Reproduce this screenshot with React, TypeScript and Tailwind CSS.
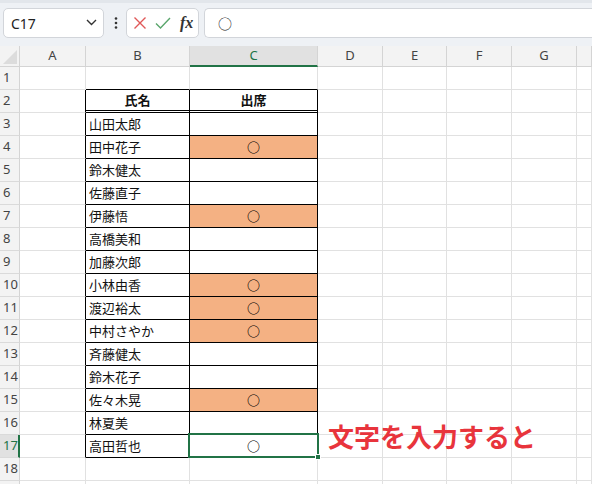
import React from 'react';

const FONT = { fontFamily: '"Noto Sans CJK JP", "Noto Sans", sans-serif' };
const UI = { fontFamily: '"Noto Sans", "Liberation Sans", sans-serif' };

const cols = [
  { key: 'A', w: 'w-[66px]' },
  { key: 'B', w: 'w-[104px]' },
  { key: 'C', w: 'w-[128px]' },
  { key: 'D', w: 'w-[65px]' },
  { key: 'E', w: 'w-[64px]' },
  { key: 'F', w: 'w-[65px]' },
  { key: 'G', w: 'w-[65px]' },
  { key: 'H', w: 'flex-1' },
];

const names: Record<number, [string, boolean]> = {
  3: ['山田太郎', false],
  4: ['田中花子', true],
  5: ['鈴木健太', false],
  6: ['佐藤直子', false],
  7: ['伊藤悟', true],
  8: ['高橋美和', false],
  9: ['加藤次郎', false],
  10: ['小林由香', true],
  11: ['渡辺裕太', true],
  12: ['中村さやか', true],
  13: ['斉藤健太', false],
  14: ['鈴木花子', false],
  15: ['佐々木晃', true],
  16: ['林夏美', false],
  17: ['高田哲也', true],
};

function Cell({ r, ci }: { r: number; ci: number }) {
  const c = cols[ci].key;
  const inTable = r >= 2 && r <= 17;
  const rightBlack = inTable && (c === 'A' || c === 'B' || c === 'C');
  const bottomBlack = r >= 1 && r <= 17 && (c === 'B' || c === 'C');
  const doubleBottom = r === 2 && (c === 'B' || c === 'C');
  const entry = names[r];
  const filled = c === 'C' && entry && entry[1] && r !== 17;
  const selected = c === 'C' && r === 17;

  let content: React.ReactNode = null;
  if (r === 2 && c === 'B') content = <span className="w-full text-center font-bold">氏名</span>;
  if (r === 2 && c === 'C') content = <span className="w-full text-center font-bold">出席</span>;
  if (entry && c === 'B') content = <span className="pl-[3px]">{entry[0]}</span>;
  if (entry && c === 'C' && entry[1])
    content = <span className="w-full text-center text-[13px] font-bold text-black">○</span>;

  return (
    <div
      className={[
        'relative flex h-full shrink-0 items-center border-r text-[13px] text-[#111]',
        cols[ci].w,
        rightBlack ? 'border-r-black' : 'border-r-[#e1e1e1]',
        doubleBottom ? 'border-b-[3px] border-double border-b-black' : 'border-b',
        !doubleBottom && bottomBlack ? 'border-b-black' : '',
        !doubleBottom && !bottomBlack ? 'border-b-[#e1e1e1]' : '',
        filled ? 'bg-[#f4b183]' : 'bg-white',
        selected ? 'z-10' : '',
      ].join(' ')}
    >
      {content}
      {selected && (
        <div className="pointer-events-none absolute -top-[2px] -left-[2px] -right-[2px] -bottom-[1px] border-2 border-[#217346]">
          <div className="absolute -right-[4px] -bottom-[4px] h-[6px] w-[6px] border border-white bg-[#217346]" />
        </div>
      )}
    </div>
  );
}

function Toolbar() {
  return (
    <div className="h-[46px] bg-[#eef1f5]" style={UI}>
      <div className="h-[3px] bg-[#e2e6eb]" />
      <div className="flex items-center pt-[5px] pl-[3px] pr-0">
        <div className="flex h-[30px] w-[101px] items-center justify-between rounded-[5px] border border-[#d2d5da] bg-white pl-[7px] pr-[6px]">
          <span className="text-[14px] text-[#222]">C17</span>
          <svg width="11" height="7" viewBox="0 0 11 7" className="mb-[1px]">
            <path d="M1 1l4.5 4.5L10 1" fill="none" stroke="#333" strokeWidth="1.4" />
          </svg>
        </div>
        <svg width="20" height="14" viewBox="0 0 20 14" className="mx-[1px]">
          <circle cx="11" cy="2.5" r="1.3" fill="#333" />
          <circle cx="11" cy="7" r="1.3" fill="#333" />
          <circle cx="11" cy="11.5" r="1.3" fill="#333" />
        </svg>
        <div className="flex h-[30px] w-[73px] items-center rounded-[5px] border border-[#d2d5da] bg-white pl-[6px]">
          <svg width="14" height="14" viewBox="0 0 14 14">
            <path d="M1.5 1.5l11 11M12.5 1.5l-11 11" stroke="#e05858" strokeWidth="1.4" />
          </svg>
          <svg width="16" height="14" viewBox="0 0 16 14" className="ml-[8px]">
            <path d="M1 7.5l4.5 4.5L15 2" fill="none" stroke="#5aa66c" strokeWidth="1.4" />
          </svg>
          <span
            className="ml-[9px] text-[16px] font-bold italic text-[#333]"
            style={{ fontFamily: '"Liberation Serif", serif' }}
          >
            fx
          </span>
        </div>
        <div className="ml-[5px] flex h-[30px] flex-1 items-center rounded-l-[5px] border border-r-0 border-[#d2d5da] bg-white pl-[13px]">
          <span className="text-[14px] text-[#222]" style={FONT}>○</span>
        </div>
      </div>
    </div>
  );
}

function HeaderRow() {
  return (
    <div className="flex h-[21px] bg-[#f3f3f3] text-[13px] text-[#444]" style={UI}>
      <div className="relative h-full w-[20px] shrink-0 border-r border-b border-[#d4d4d4]">
        <svg width="14" height="14" viewBox="0 0 14 14" className="absolute right-[2px] bottom-[2px]">
          <path d="M14 0V14H0Z" fill="#dcdcdc" />
        </svg>
      </div>
      {cols.map((c) => (
        <div
          key={c.key}
          className={[
            'flex h-full shrink-0 items-center justify-center border-r border-r-[#d4d4d4]',
            c.w,
            c.key === 'C'
              ? 'border-b-2 border-b-[#217346] bg-[#e1e1e1] text-[#217346]'
              : 'border-b border-b-[#d4d4d4]',
          ].join(' ')}
        >
          {c.key === 'H' ? '' : c.key}
        </div>
      ))}
    </div>
  );
}

export default function App() {
  const rows = Array.from({ length: 19 }, (_, i) => i + 1);
  return (
    <div className="relative h-[484px] w-[592px] overflow-hidden bg-white">
      <Toolbar />
      <HeaderRow />
      <div style={FONT}>
        {rows.map((r) => (
          <div key={r} className="flex h-[23px]">
            <div
              className={[
                'flex h-full w-[20px] shrink-0 items-center border-b border-b-[#dadada] pl-[3px] text-[13px]',
                r === 17
                  ? 'border-r-2 border-r-[#217346] bg-[#e1e1e1] text-[#217346]'
                  : 'border-r border-r-[#d4d4d4] bg-[#f3f3f3] text-[#444]',
              ].join(' ')}
              style={UI}
            >
              {r <= 18 ? r : ''}
            </div>
            {cols.map((c, ci) => (
              <Cell key={c.key} r={r} ci={ci} />
            ))}
          </div>
        ))}
      </div>
      <div
        className="absolute top-[423px] left-[328px] z-20 text-[26px] font-bold leading-none text-[#e8343c]"
        style={FONT}
      >
        文字を入力すると
      </div>
    </div>
  );
}
